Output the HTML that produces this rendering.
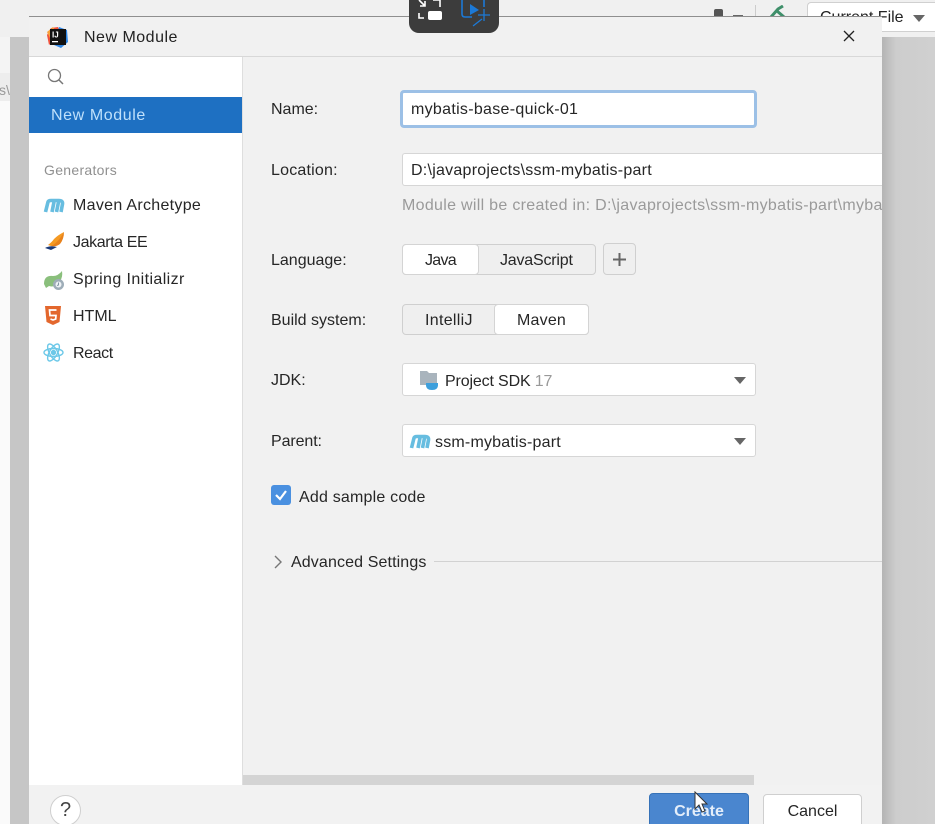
<!DOCTYPE html>
<html style="height:824px;overflow:hidden"><head><meta charset="utf-8"><style>
html,body{margin:0;padding:0}
body{width:935px;height:824px;overflow:hidden;position:relative;background:#f1f1f1;font-family:"Liberation Sans",sans-serif;font-size:15px;color:#262626}
div,svg{position:absolute}
.t{white-space:nowrap;line-height:20px;font-size:16px}
.box{box-sizing:border-box;background:#fff;border:1px solid #d6d6d6;border-radius:3px}
.seg{box-sizing:border-box;border:1px solid #cfcfcf;border-radius:4px;background:#efefef}
.on{box-sizing:border-box;background:#fff;border:1px solid #d4d4d4;border-radius:4px}
.arr{width:0;height:0;border-left:6.5px solid transparent;border-right:6.5px solid transparent;border-top:7px solid #666}
</style></head><body>
<div id="root" style="left:0;top:0;width:935px;height:824px;overflow:hidden">
<!-- background -->
<div style="left:0;top:0;width:935px;height:37px;background:#f0f0f0"></div>
<div style="left:0;top:37px;width:10px;height:787px;background:#fafafa"></div>
<div style="left:0;top:37px;width:10px;height:36px;background:#f4f4f4"></div>
<div style="left:0;top:73px;width:10px;height:28px;background:#ededed"></div>
<div class="t" style="left:-1px;top:80px;color:#999;font-size:14px">s\</div>
<div style="left:10px;top:37px;width:19px;height:787px;background:#c6c6c6"></div>
<div style="left:882px;top:37px;width:53px;height:787px;background:linear-gradient(90deg,#b4b4b4,#cdcdcd 14px,#d0d0d0)"></div>
<!-- top right IDE bar -->
<div style="left:714px;top:9px;width:9px;height:10px;background:#555;border-radius:2px"></div>
<div style="left:733px;top:15px;width:10px;height:2px;background:#666"></div>
<div style="left:755px;top:5px;width:1px;height:12px;background:#ccc"></div>
<svg style="left:769px;top:5px" width="18" height="12"><path d="M2 12L9 4L14 1M8 6L15 12" fill="none" stroke="#3f8f6a" stroke-width="3"/></svg>
<div style="left:807px;top:2px;width:128px;height:30px;box-sizing:border-box;background:#fff;border:1px solid #d0d0d0;border-right:0;border-radius:4px 0 0 4px"></div>
<div class="t" style="left:820px;top:8px;color:#222">Current File</div>
<div class="arr" style="left:913px;top:15px"></div>
<!-- dialog -->
<div style="left:29px;top:17px;width:853px;height:807px;background:#f1f1f1;box-shadow:0 -1px 0 #8f8f8f"></div>
<div style="left:29px;top:56px;width:853px;height:1px;background:#d8d8d8"></div>
<!-- recording toolbar -->
<div style="left:409px;top:-10px;width:90px;height:43px;background:#3c3c3c;border-radius:0 0 10px 10px"></div>
<svg style="left:409px;top:0" width="90" height="33">
<path d="M10 0L16 6M16 1V6H11" fill="none" stroke="#fff" stroke-width="1.6"/>
<path d="M24 0H31V7M10 13V18H15" fill="none" stroke="#fff" stroke-width="1.6"/>
<rect x="19" y="11" width="14" height="9" rx="2" fill="#fff"/>
<path d="M53 0V14Q53 17 56 17H63M75 0V7" fill="none" stroke="#1c79d6" stroke-width="1.6"/>
<path d="M61 4L70 10L61 15Z" fill="#1c79d6"/>
<path d="M75 9V21M69 15H81M73 19L64 26" fill="none" stroke="#1c79d6" stroke-width="1.3"/>
</svg>
<!-- titlebar -->
<svg style="left:46px;top:26px" width="23" height="23">
<path d="M1 9L5 2L12 1L14 6L9 13L3 19Z" fill="#f0523c"/>
<path d="M1 6L7 1L10 6L4 12Z" fill="#f8a13a"/>
<path d="M13 1L21 4L22 16L15 22L8 19Z" fill="#2f87e6"/>
<rect x="4" y="3" width="16" height="16" fill="#111"/>
<text x="6" y="11.500" font-size="8" font-weight="bold" fill="#fff" font-family="Liberation Sans">IJ</text>
<rect x="6" y="15" width="6" height="1.300" fill="#fff"/>
</svg>
<div class="t" style="left:84px;top:28px;letter-spacing:.5px;color:#222">New Module</div>
<svg style="left:842px;top:29px" width="14" height="14"><path d="M2 2L12 12M12 2L2 12" stroke="#222" stroke-width="1.300" fill="none"/></svg>
<!-- sidebar -->
<div style="left:29px;top:57px;width:214px;height:728px;background:#fff"></div>
<div style="left:242px;top:57px;width:1px;height:728px;background:#dedede"></div>
<svg style="left:46px;top:67px" width="20" height="20"><circle cx="8.500" cy="8.500" r="6" fill="none" stroke="#777" stroke-width="1.300"/><path d="M13 13L17 17" stroke="#777" stroke-width="1.500"/></svg>
<div style="left:29px;top:97px;width:213px;height:36px;background:#1e70c2"></div>
<div class="t" style="left:51px;top:106px;letter-spacing:.6px;color:#bfe0fb">New Module</div>
<div class="t" style="left:44px;top:160px;font-size:14px;letter-spacing:.3px;color:#909090">Generators</div>
<svg style="left:43px;top:197px" width="22" height="17"><path d="M2.500 15L5 5Q5.500 3.500 8 3.500H16Q20 3.500 19.500 7L18 15M9 15L11 5M13.500 15L15.500 5" fill="none" stroke="#67bde0" stroke-width="3.600"/></svg>
<div class="t" style="left:73px;top:196px;letter-spacing:.3px">Maven Archetype</div>
<svg style="left:44px;top:232px" width="22" height="20"><path d="M20 0Q18 5 16 8Q12 14 7 14L4 13Q8 10 10 7Q14 3 20 0Z" fill="#f59a23"/><path d="M20 0Q20 7 16 12Q12 15 7 14Q14 11 20 0Z" fill="#e8821c"/><path d="M1 16Q6 13 13 15L7 18Z" fill="#1b3a78"/></svg>
<div class="t" style="left:73px;top:233px;letter-spacing:-.4px">Jakarta EE</div>
<svg style="left:44px;top:270px" width="22" height="21"><path d="M0 14Q0 5 9 6Q14 6 18 1Q19 7 16 11Q12 18 5 16L2 18Z" fill="#8abf7c"/><circle cx="14.500" cy="14.500" r="5.500" fill="#9eadb8"/><circle cx="14.500" cy="14.500" r="3" fill="#eef2f5"/><path d="M14.500 12.500V15L13 15.500" stroke="#8296a3" fill="none"/></svg>
<div class="t" style="left:73px;top:270px;letter-spacing:.4px">Spring Initializr</div>
<svg style="left:45px;top:306px" width="17" height="20"><path d="M0 0H16L14.500 16L8 19L1.500 16Z" fill="#e3672d"/><path d="M11.500 4H4.500L5 9.500H11L10.700 13L8 14L5.500 13" fill="none" stroke="#fff" stroke-width="1.700"/></svg>
<div class="t" style="left:73px;top:307px">HTML</div>
<svg style="left:43px;top:342px" width="21" height="21" fill="none" stroke="#6cc8e8" stroke-width="1.400"><ellipse cx="10.500" cy="10.500" rx="9.500" ry="4"/><ellipse cx="10.500" cy="10.500" rx="9.500" ry="4" transform="rotate(60 10.500 10.500)"/><ellipse cx="10.500" cy="10.500" rx="9.500" ry="4" transform="rotate(120 10.500 10.500)"/><circle cx="10.500" cy="10.500" r="2" fill="#6cc8e8"/></svg>
<div class="t" style="left:73px;top:344px;letter-spacing:-.4px">React</div>
<!-- form -->
<div class="t" style="left:271px;top:100px">Name:</div>
<div style="left:400px;top:90px;width:357px;height:38px;box-sizing:border-box;background:#fff;border:3px solid #9cc0e6;border-radius:4px"></div>
<div class="t" style="left:411px;top:100px;letter-spacing:.3px">mybatis-base-quick-01</div>
<div class="t" style="left:271px;top:161px;letter-spacing:.2px">Location:</div>
<div class="box" style="left:402px;top:153px;width:480px;height:33px;border-right:0;border-radius:3px 0 0 3px"></div>
<div class="t" style="left:411px;top:161px;letter-spacing:.25px">D:\javaprojects\ssm-mybatis-part</div>
<div style="left:402px;top:195px;width:480px;height:22px;overflow:hidden"><div class="t" style="left:0;top:1px;color:#9a9a9a;letter-spacing:.3px">Module will be created in: D:\javaprojects\ssm-mybatis-part\mybatis-base-quick-01</div></div>
<div class="t" style="left:271px;top:251px">Language:</div>
<div class="seg" style="left:402px;top:244px;width:194px;height:31px"></div>
<div class="on" style="left:402px;top:244px;width:77px;height:31px"></div>
<div class="t" style="left:425px;top:251px;letter-spacing:-.7px">Java</div>
<div class="t" style="left:500px;top:251px;letter-spacing:-.2px">JavaScript</div>
<div class="seg" style="left:603px;top:243px;width:33px;height:32px"></div>
<svg style="left:612px;top:252px" width="15" height="15"><path d="M7.500 1V14M1 7.500H14" stroke="#666" stroke-width="2"/></svg>
<div class="t" style="left:271px;top:311px">Build system:</div>
<div class="seg" style="left:402px;top:304px;width:187px;height:31px"></div>
<div class="on" style="left:494px;top:304px;width:95px;height:31px"></div>
<div class="t" style="left:425px;top:311px;letter-spacing:.3px">IntelliJ</div>
<div class="t" style="left:517px;top:311px;letter-spacing:.2px">Maven</div>
<div class="t" style="left:271px;top:371px">JDK:</div>
<div class="box" style="left:402px;top:363px;width:354px;height:33px"></div>
<svg style="left:419px;top:370px" width="22" height="21"><path d="M1 1H8L10 3H18V15H1Z" fill="#a9b4bd"/><path d="M7 13H19V15Q19 20 13 20Q7 20 7 15Z" fill="#3d9fdc"/></svg>
<div class="t" style="left:445px;top:372px;letter-spacing:-.15px">Project SDK <span style="color:#999">17</span></div>
<div class="arr" style="left:734px;top:377px"></div>
<div class="t" style="left:271px;top:432px;letter-spacing:-.1px">Parent:</div>
<div class="box" style="left:402px;top:424px;width:354px;height:33px"></div>
<svg style="left:409px;top:433px" width="22" height="17"><path d="M2.500 15L5 5Q5.500 3.500 8 3.500H16Q20 3.500 19.500 7L18 15M9 15L11 5M13.500 15L15.500 5" fill="none" stroke="#67bde0" stroke-width="3.600"/></svg>
<div class="t" style="left:435px;top:433px;letter-spacing:.2px">ssm-mybatis-part</div>
<div class="arr" style="left:734px;top:438px"></div>
<div style="left:271px;top:485px;width:20px;height:20px;background:#4a90e0;border-radius:3px"></div>
<svg style="left:271px;top:485px" width="20" height="20"><path d="M5 10L9 14L15 6" fill="none" stroke="#fff" stroke-width="2.200"/></svg>
<div class="t" style="left:299px;top:488px;letter-spacing:.2px">Add sample code</div>
<svg style="left:272px;top:555px" width="12" height="14"><path d="M3 1L9 7L3 13" fill="none" stroke="#777" stroke-width="1.400"/></svg>
<div class="t" style="left:291px;top:553px;letter-spacing:.12px">Advanced Settings</div>
<div style="left:434px;top:561px;width:448px;height:1px;background:#d2d2d2"></div>
<!-- scrollbar -->
<div style="left:243px;top:775px;width:511px;height:10px;background:#d4d4d4"></div>
<!-- footer -->
<div style="left:29px;top:785px;width:853px;height:39px;background:#f2f2f2"></div>
<div style="left:50px;top:795px;width:31px;height:31px;box-sizing:border-box;background:#fff;border:1px solid #cfcfcf;border-radius:50%"></div>
<div class="t" style="left:50px;top:800px;width:31px;text-align:center;font-size:20px;color:#444">?</div>
<div style="left:649px;top:793px;width:100px;height:40px;box-sizing:border-box;background:#4a86cf;border:1px solid #3672b8;border-radius:4px"></div>
<div class="t" style="left:649px;top:802px;width:100px;text-align:center;font-weight:bold;color:#e4eefa">Create</div>
<svg style="left:694px;top:791px" width="15" height="24"><path d="M1 1V18L5 14L8 21L11 20L8 13H13Z" fill="#fff" stroke="#333" stroke-width="1"/></svg>
<div style="left:763px;top:794px;width:99px;height:40px;box-sizing:border-box;background:#fff;border:1px solid #cfcfcf;border-radius:4px"></div>
<div class="t" style="left:763px;top:802px;width:99px;text-align:center">Cancel</div>
</div>
</body></html>
